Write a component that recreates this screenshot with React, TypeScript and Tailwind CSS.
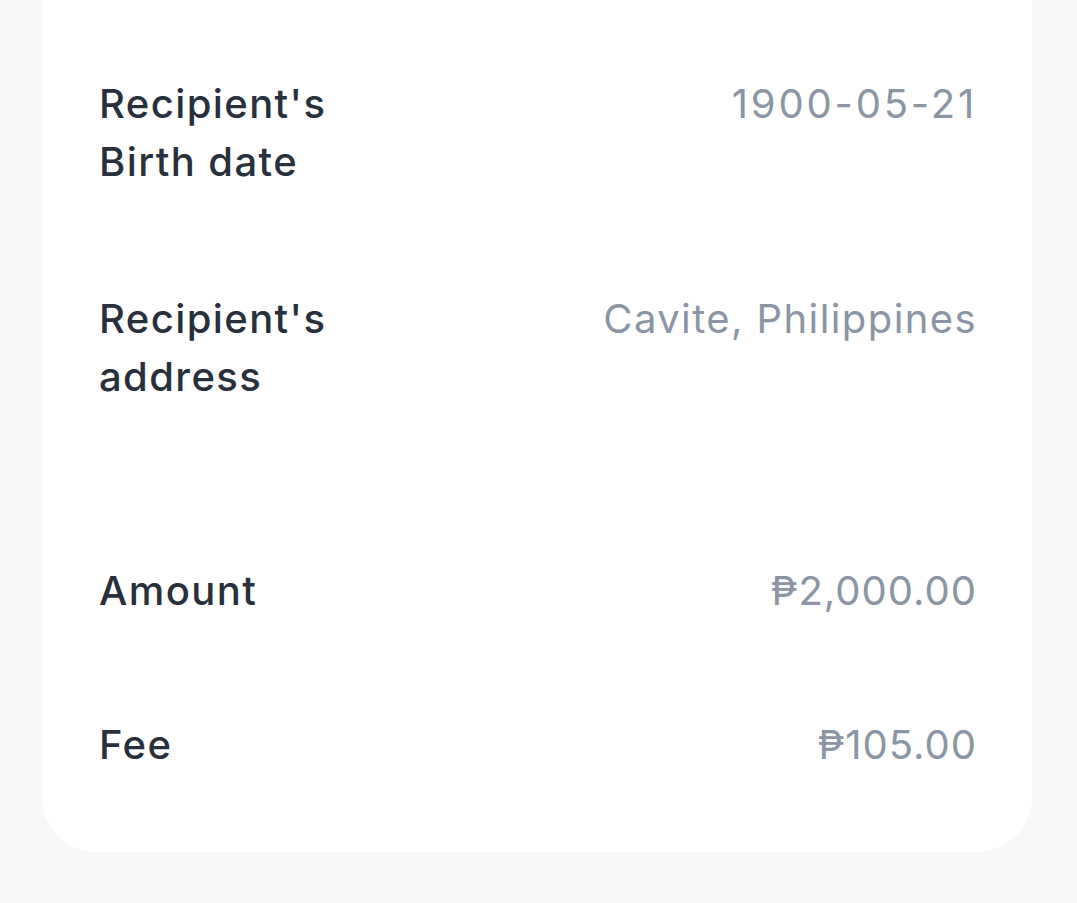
export default function App() {
  return (
    <div className="min-h-[903px] bg-[#f8f8f8] font-['Inter',sans-serif]">
      <div className="ml-[42px] mr-[45px] rounded-b-[55px] bg-white pb-[78px] pl-[57px] pr-[55px] pt-[75px] text-[40px] leading-[58px] tracking-[0.035em]">
        <div className="flex items-start justify-between">
          <div className="font-medium text-[#27303b]">
            Recipient's
            <br />
            Birth date
          </div>
          <div className="tracking-[0.07em] text-[#8b95a3]">1900-05-21</div>
        </div>
        <div className="mt-[99px] flex items-start justify-between">
          <div className="font-medium text-[#27303b]">
            Recipient's
            <br />
            address
          </div>
          <div className="text-[#8b95a3]">Cavite, Philippines</div>
        </div>
        <div className="mt-[156px] flex items-start justify-between">
          <div className="font-medium text-[#27303b]">Amount</div>
          <div className="tracking-[0.025em] text-[#8b95a3]">₱2,000.00</div>
        </div>
        <div className="mt-[96px] flex items-start justify-between">
          <div className="font-medium text-[#27303b]">Fee</div>
          <div className="tracking-[0.025em] text-[#8b95a3]">₱105.00</div>
        </div>
      </div>
    </div>
  );
}
